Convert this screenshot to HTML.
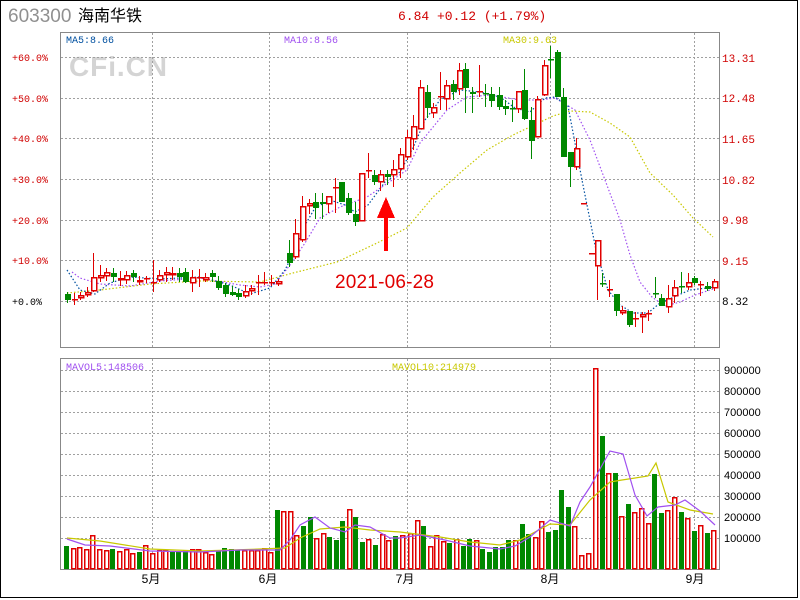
<!DOCTYPE html>
<html><head><meta charset="utf-8"><style>
html,body{margin:0;padding:0;background:#fff;}
body{width:800px;height:600px;overflow:hidden;position:relative;}
svg{position:absolute;left:0;top:0;}
</style></head><body>
<svg id="s" width="800" height="600" viewBox="0 0 800 600" xmlns="http://www.w3.org/2000/svg" shape-rendering="crispEdges">
<rect x="0.5" y="0.5" width="797" height="597" fill="#fff" stroke="#000" stroke-width="1"/>
<text x="8" y="22" font-family="Liberation Sans, sans-serif" font-size="19" fill="#909090">603300</text>
<text x="78" y="21" font-family="Liberation Sans, Noto Sans CJK SC, sans-serif" font-size="16" fill="#000">海南华铁</text>
<text x="398" y="20" font-family="Liberation Mono, monospace" font-size="13" fill="#d00000">6.84 +0.12 (+1.79%)</text>
<text x="69" y="76" font-family="Liberation Sans, sans-serif" font-size="28" font-weight="bold" fill="#d4d4d4" textLength="98">CFi.CN</text>
<g id="grid" stroke="#a0a0a0" stroke-width="1" stroke-dasharray="2,2"></g>
<rect x="60.5" y="32.5" width="659" height="315" fill="none" stroke="#888"/>
<rect x="60.5" y="358.5" width="659" height="211" fill="none" stroke="#888"/>
<g font-family="Liberation Mono, monospace" font-size="10">
<text x="66" y="43" fill="#0050a0">MA5:8.66</text>
<text x="284" y="43" fill="#a050f0">MA10:8.56</text>
<text x="503" y="43" fill="#c8c800">MA30:9.63</text>
<text x="66" y="370" fill="#a050f0">MAVOL5:148506</text>
<text x="392" y="370" fill="#c8c800">MAVOL10:214979</text>
</g>
<g font-family="Liberation Mono, monospace" font-size="10" fill="#d00000" text-anchor="end">
<text x="48" y="61">+60.0%</text><text x="48" y="102">+50.0%</text><text x="48" y="142">+40.0%</text>
<text x="48" y="183">+30.0%</text><text x="48" y="224">+20.0%</text><text x="48" y="264">+10.0%</text>
<text x="42" y="305" fill="#000">+0.0%</text>
</g>
<g font-family="Liberation Mono, monospace" font-size="11" fill="#d00000">
<text x="722" y="62">13.31</text><text x="722" y="102">12.48</text><text x="722" y="143">11.65</text>
<text x="722" y="184">10.82</text><text x="722" y="224">9.98</text><text x="722" y="265">9.15</text>
<text x="722" y="305" fill="#000">8.32</text>
</g>
<g font-family="Liberation Sans, sans-serif" font-size="11" fill="#000">
<text x="724" y="374">900000</text><text x="724" y="395">800000</text><text x="724" y="416">700000</text>
<text x="724" y="437">600000</text><text x="724" y="458">500000</text><text x="724" y="479">400000</text>
<text x="724" y="500">300000</text><text x="724" y="521">200000</text><text x="724" y="542">100000</text>
</g>
<g font-family="Liberation Sans, Noto Sans CJK SC, sans-serif" font-size="12" fill="#000" text-anchor="middle">
<text x="151" y="583">5月</text><text x="268" y="583">6月</text><text x="405" y="583">7月</text>
<text x="550" y="583">8月</text><text x="695" y="583">9月</text>
</g>
<g id="ma" fill="none" stroke-width="1.2" stroke-dasharray="1.5,2" shape-rendering="auto"></g>
<g id="cd"></g>
<g id="vol"></g>
<g id="vma" fill="none" stroke-width="1.2" shape-rendering="auto"></g>
<polygon points="386,197 377,218 395,218" fill="#f00"/>
<rect x="384" y="216" width="4" height="35" fill="#f00"/>
<text x="335" y="288" font-family="Liberation Sans, sans-serif" font-size="19" fill="#e00000" textLength="99">2021-06-28</text>
</svg>
<script>
var NS="http://www.w3.org/2000/svg";
function el(p,t,a){var e=document.createElementNS(NS,t);for(var k in a)e.setAttribute(k,a[k]);document.getElementById(p).appendChild(e);return e;}
[152,269,407,550,694].forEach(function(x){el('grid','line',{x1:x+.5,y1:33,x2:x+.5,y2:347});el('grid','line',{x1:x+.5,y1:359,x2:x+.5,y2:569});});
[57,98,138,179,220,260,301].forEach(function(y){el('grid','line',{x1:61,y1:y+.5,x2:719,y2:y+.5});});
[370,391,412,433,454,475,496,517,538].forEach(function(y){el('grid','line',{x1:61,y1:y+.5,x2:719,y2:y+.5});});
var L=[[294,300,292,303],[300,299,293,305],[298,295,292,300],[295,292,287,297],[291,277,253,292],[278,275,265,282],[276,272,268,281],[273,277,268,282],[280,278,271,286],[280,275,271,284],[273,277,270,282],[282,280,276,285],[279,278,276,283],[283,282,260,292],[280,275,270,282],[275,272,267,282],[275,273,267,280],[273,277,268,282],[272,282,268,283],[283,277,270,292],[278,277,269,287],[280,277,273,282],[273,277,270,282],[281,288,276,290],[285,294,283,297],[292,295,286,296],[293,297,289,300],[296,291,285,298],[291,288,285,295],[283,282,275,295],[283,282,272,285],[283,282,275,286],[284,281,279,286]];
var C=[];L.forEach(function(d,i){C.push([67+6.58*i].concat(d));});
var R=[[289,253,263,240,267],[295,257,233,219,259],[302,240,206,196,242],[309,206,203,199,214],[315,202,208,193,219],[322,202,204,193,219],[328,204,196,196,213],[335,188,187,178,213],[341,182,202,182,202],[348,198,213,193,215],[355,214,222,202,226],[361,221,173,173,221],[368,170,170,153,178],[374,175,182,170,185],[380,182,174,170,191],[387,174,177,170,185],[393,175,169,160,187],[400,169,154,148,178],[407,157,137,130,160],[413,139,126,115,150],[420,129,87,80,129],[427,92,108,85,118],[433,113,107,103,118],[440,97,96,72,110],[446,99,85,80,110],[453,84,92,80,100],[459,89,70,63,95],[465,69,88,63,113],[472,92,94,87,113],[479,92,91,65,97],[485,93,94,84,107],[491,94,101,87,107],[499,95,107,87,110],[505,106,109,100,115],[512,108,109,100,122],[518,109,91,91,113],[524,90,119,69,120],[531,120,141,107,159],[537,137,99,96,137],[544,95,65,60,96],[550,59,60,46,78],[557,52,97,50,97],[563,97,157,88,157],[570,152,167,152,187],[576,167,148,138,170],[583,204,203,204,204],[591,254,253,254,254],[597,266,240,240,300],[602,283,284,273,287],[609,290,289,280,297],[616,294,311,294,316],[622,313,310,306,315],[629,311,325,311,327],[635,319,318,312,327],[642,317,314,312,333],[648,314,313,310,321],[655,293,294,277,298],[661,298,306,294,306],[668,307,298,285,313],[674,296,287,280,303],[681,286,287,272,293],[688,287,282,273,290],[694,278,283,276,285],[700,285,284,281,296],[707,286,289,282,291],[714,288,281,279,291]];
C=C.concat(R);
C.forEach(function(d){var x=Math.round(d[0]),o=d[1],c=d[2],h=d[3],l=d[4];var up=c<=o;var col=up?'#e00000':'#008800';
 el('cd','line',{x1:x+.5,y1:h,x2:x+.5,y2:l,stroke:col});
 var t=Math.min(o,c),b=Math.max(o,c);
 if(b-t<1.5){el('cd','rect',{x:x-2,y:t,width:6,height:1.5,fill:col});}
 else if(up){el('cd','rect',{x:x-2+.5,y:t+.5,width:5,height:b-t-1,fill:'#fff',stroke:col,'stroke-width':1.5});}
 else{el('cd','rect',{x:x-2,y:t,width:6,height:b-t,fill:col});}
});
function pl(g,pts,col){el(g,'polyline',{points:pts,stroke:col});}
pl('ma',"67,293 100,290 150,284 200,281 260,282 293,273 337,262 377,243 407,228 433,197 460,173 487,150 513,135 553,116 570,111 590,112 610,123 630,137 650,173 673,195 693,218 713,237","#c8c800");
pl('ma',"72,272 80,278 100,284 130,286 160,281 200,278 240,285 260,287 275,284 290,265 305,243 320,218 340,207 367,197 407,170 420,143 447,110 467,97 490,95 520,100 540,100 555,98 575,110 590,140 605,180 620,220 630,255 640,282 652,297 665,306 680,302 695,295 713,289","#a050f0");
pl('ma',"67,270 80,290 95,294 110,283 130,277 160,279 200,277 230,285 250,294 270,288 285,270 295,250 305,225 315,208 330,200 345,205 355,212 368,205 385,182 400,172 413,148 425,120 440,100 460,90 480,92 500,97 515,108 530,112 545,98 555,97 568,106 582,180 596,250 608,290 620,305 633,313 648,313 660,303 690,290 715,287","#0050a0");
var V=[[66,546,0],[73,548,1],[79,547,1],[86,549,1],[92,535,1],[99,549,1],[106,550,1],[112,549,0],[119,551,1],[126,549,1],[132,553,1],[139,552,0],[145,545,1],[152,553,1],[159,550,1],[165,550,1],[172,551,0],[178,551,0],[185,550,0],[192,549,1],[198,549,1],[205,552,1],[211,554,1],[218,551,0],[224,548,0],[231,549,0],[237,550,0],[244,550,1],[251,550,1],[257,550,1],[264,548,1],[270,552,1],[277,510,0],[283,511,1],[290,511,1],[296,535,1],[303,526,0],[310,517,0],[316,538,1],[323,533,1],[329,537,0],[336,540,0],[342,521,0],[349,509,1],[355,517,0],[362,542,0],[368,539,1],[375,545,0],[382,534,1],[388,540,1],[395,536,0],[402,535,1],[410,533,1],[417,520,1],[423,526,0],[430,546,1],[436,535,1],[443,541,1],[449,543,0],[456,539,1],[463,546,0],[469,539,0],[476,540,1],[482,549,0],[489,552,0],[495,547,0],[502,547,0],[508,540,0],[515,540,1],[522,524,0],[528,534,0],[535,537,1],[541,521,1],[548,532,0],[555,530,0],[561,490,0],[568,507,0],[574,526,1],[581,555,1],[588,553,1],[595,368,1],[602,436,0],[608,473,1],[615,473,0],[621,516,1],[628,504,0],[634,512,1],[641,508,1],[648,523,1],[654,474,0],[661,513,0],[667,510,1],[674,497,1],[681,512,0],[687,518,1],[694,531,0],[700,525,1],[707,533,0],[713,530,1]];
V.forEach(function(d){var x=d[0]-2,t=d[1];if(d[2]){el('vol','rect',{x:x+.5,y:t+.5,width:4,height:569-t-1,fill:'#fff',stroke:'#e00000','stroke-width':1.5});}else{el('vol','rect',{x:x,y:t,width:5,height:569-t,fill:'#008800'});}});
pl('vma',"67,538 100,541 150,549 200,551 260,549 285,548 300,538 320,529 345,527 370,530 400,532 440,537 470,542 500,545 520,540 550,524 570,525 590,500 610,482 622,480 648,476 656,463 668,502 690,510 713,514","#c8c800");
pl('vma',"67,539 85,545 110,546 150,551 200,552 240,550 280,550 290,540 300,525 315,517 330,528 345,532 355,525 370,527 390,538 400,538 420,535 445,540 470,546 500,549 515,546 530,537 550,520 570,526 580,502 590,487 610,451 623,454 635,495 647,516 658,507 675,505 685,500 700,511 715,525","#a050f0");
</script>
</body></html>
